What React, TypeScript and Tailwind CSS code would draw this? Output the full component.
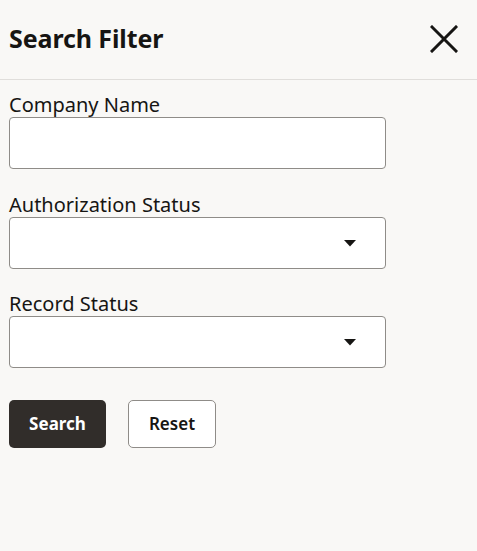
import React from "react";

function Caret() {
  return (
    <svg width="12" height="7" viewBox="0 0 12 7" className="block">
      <path d="M0 0 L12 0 L6 6.5 Z" fill="#161513" />
    </svg>
  );
}

function SelectBox() {
  return (
    <div className="h-[52px] w-[377px] rounded-[4px] border border-[#8f8c88] bg-white flex items-center justify-end pr-[29px]">
      <Caret />
    </div>
  );
}

export default function App() {
  return (
    <div
      className="w-[477px] h-[551px] bg-[#f9f8f6] text-[#161513]"
      style={{ fontFamily: '"Noto Sans", "Open Sans", sans-serif' }}
    >
      <div className="h-[80px] border-b border-[#e0dedb] flex items-center justify-between pl-[9px] pr-[19px]">
        <h1 className="text-[25px] font-bold leading-none -mt-[3px] tracking-[-0.1px]">Search Filter</h1>
        <svg width="28" height="28" viewBox="0 0 28 28" className="block -mt-[2px]">
          <path d="M2 2 L26 26 M26 2 L2 26" stroke="#161513" strokeWidth="3" strokeLinecap="square" />
        </svg>
      </div>
      <div className="pl-[9px] pt-[11px] flex flex-col">
        <label className="text-[20px] leading-[27px] h-[26px]">Company Name</label>
        <div className="h-[52px] w-[377px] rounded-[4px] border border-[#8f8c88] bg-white" />
        <label className="text-[20px] leading-[27px] h-[26px] mt-[22px]">Authorization Status</label>
        <SelectBox />
        <label className="text-[20px] leading-[27px] h-[26px] mt-[21px]">Record Status</label>
        <SelectBox />
        <div className="flex gap-[22px] mt-[32px]">
          <button className="h-[48px] w-[97px] rounded-[5px] bg-[#312d2a] text-white text-[17px] font-bold">
            Search
          </button>
          <button className="h-[48px] w-[88px] rounded-[5px] border border-[#8f8c88] bg-white text-[#161513] text-[17px] font-semibold">
            Reset
          </button>
        </div>
      </div>
    </div>
  );
}
